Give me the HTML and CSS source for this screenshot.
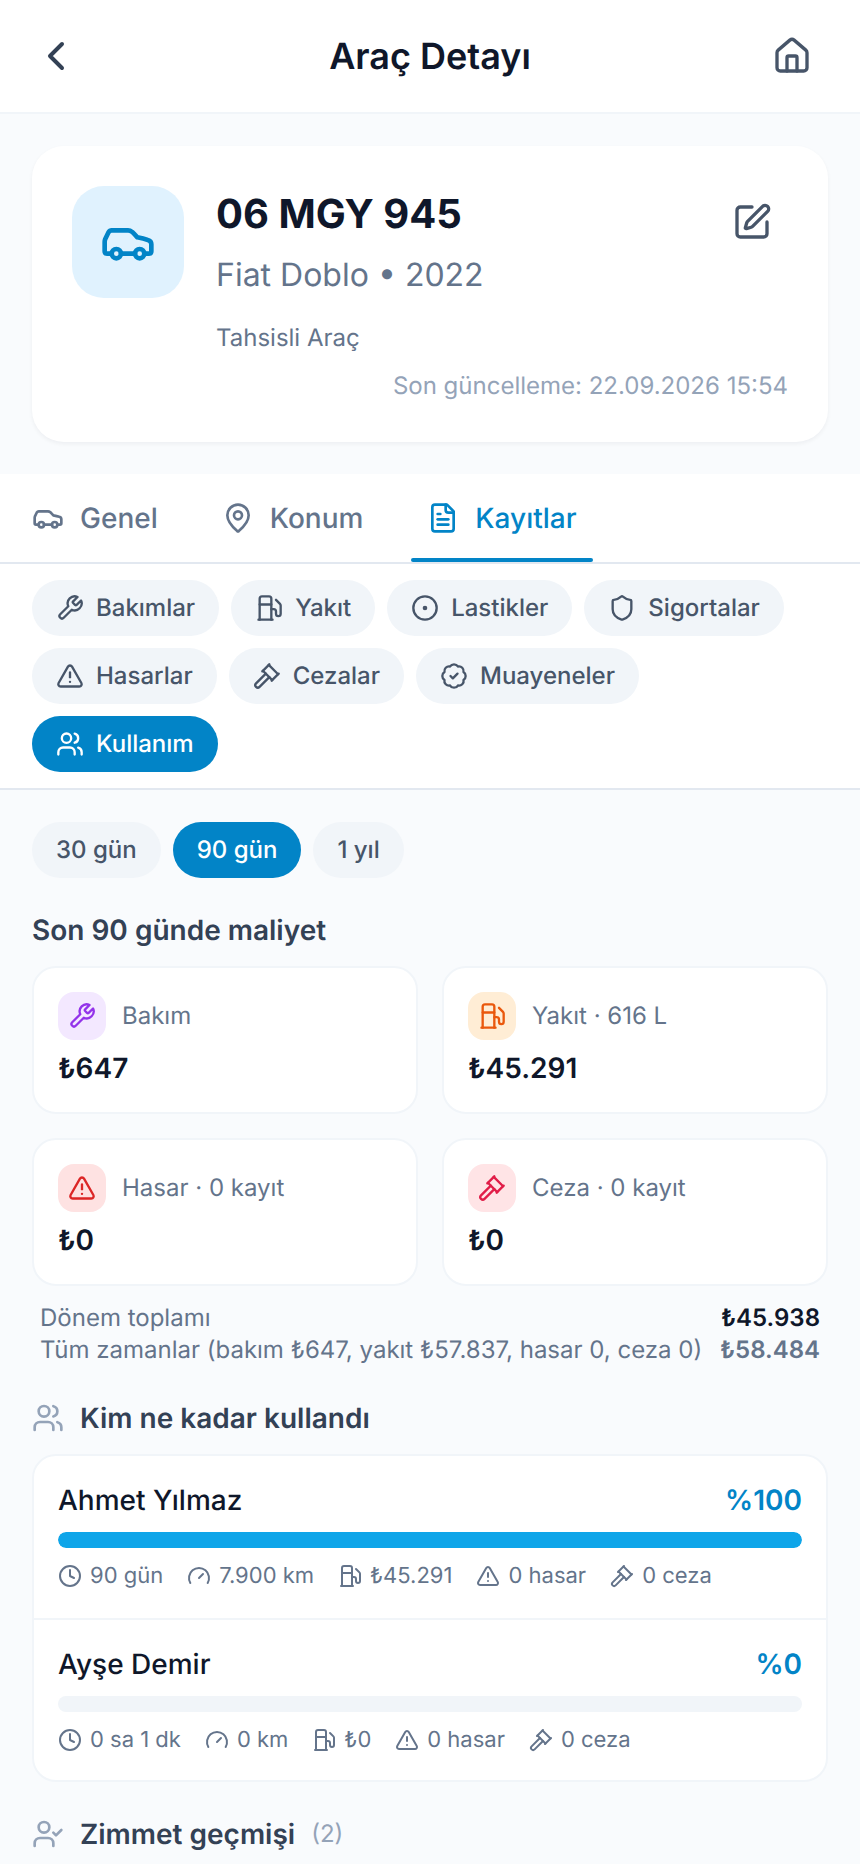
FILE: index.html
```html
<!DOCTYPE html>
<html lang="tr">
<head>
<meta charset="utf-8">
<title>Araç Detayı</title>
<link rel="stylesheet" href="styles.css">
</head>
<body>
<svg class="sprite" aria-hidden="true">
  <symbol id="back" viewBox="0 0 24 24"><path d="m15 18-6-6 6-6"/></symbol>
  <symbol id="home" viewBox="0 0 24 24"><path d="M15 21v-8a1 1 0 0 0-1-1h-4a1 1 0 0 0-1 1v8"/><path d="M3 10a2 2 0 0 1 .709-1.528l7-5.999a2 2 0 0 1 2.582 0l7 5.999A2 2 0 0 1 21 10v9a2 2 0 0 1-2 2H5a2 2 0 0 1-2-2z"/></symbol>
  <symbol id="edit" viewBox="0 0 24 24"><path d="M12 3H5a2 2 0 0 0-2 2v14a2 2 0 0 0 2 2h14a2 2 0 0 0 2-2v-7"/><path d="M18.375 2.625a1 1 0 0 1 3 3l-9.013 9.014a2 2 0 0 1-.853.505l-2.873.84a.5.5 0 0 1-.62-.62l.84-2.873a2 2 0 0 1 .506-.852z"/></symbol>
  <symbol id="car" viewBox="0 0 24 24"><path d="M19 17h2c.6 0 1-.4 1-1v-3c0-.9-.7-1.700-1.500-1.900C18.700 10.600 16 10 16 10s-1.300-1.400-2.200-2.300c-.5-.4-1.100-.7-1.800-.7H5c-.6 0-1.100.4-1.400.9l-1.400 2.900A3.700 3.700 0 0 0 2 12v4c0 .6.4 1 1 1h2"/><circle cx="7" cy="17" r="2"/><path d="M9 17h6"/><circle cx="17" cy="17" r="2"/></symbol>
  <symbol id="pin" viewBox="0 0 24 24"><path d="M20 10c0 4.993-5.539 10.193-7.399 11.799a1 1 0 0 1-1.202 0C9.539 20.193 4 14.993 4 10a8 8 0 0 1 16 0"/><circle cx="12" cy="10" r="3"/></symbol>
  <symbol id="file" viewBox="0 0 24 24"><path d="M15 2H6a2 2 0 0 0-2 2v16a2 2 0 0 0 2 2h12a2 2 0 0 0 2-2V7Z"/><path d="M14 2v4a2 2 0 0 0 2 2h4"/><path d="M10 9H8"/><path d="M16 13H8"/><path d="M16 17H8"/></symbol>
  <symbol id="wrench" viewBox="0 0 24 24"><path d="M14.700 6.300a1 1 0 0 0 0 1.400l1.600 1.600a1 1 0 0 0 1.400 0l3.770-3.770a6 6 0 0 1-7.940 7.940l-6.910 6.910a2.120 2.120 0 0 1-3-3l6.910-6.910a6 6 0 0 1 7.940-7.940l-3.760 3.760z"/></symbol>
  <symbol id="fuel" viewBox="0 0 24 24"><path d="M3 22h12"/><path d="M4 9h10"/><path d="M14 22V4a2 2 0 0 0-2-2H6a2 2 0 0 0-2 2v18"/><path d="M14 13h2a2 2 0 0 1 2 2v2a2 2 0 0 0 2 2a2 2 0 0 0 2-2V9.830a2 2 0 0 0-.59-1.420L18 5"/></symbol>
  <symbol id="tire" viewBox="0 0 24 24"><circle cx="12" cy="12" r="10"/><circle cx="12" cy="12" r="1"/></symbol>
  <symbol id="shield" viewBox="0 0 24 24"><path d="M20 13c0 5-3.500 7.500-7.660 8.950a1 1 0 0 1-.67-.01C7.500 20.500 4 18 4 13V6a1 1 0 0 1 1-1c2 0 4.500-1.200 6.240-2.720a1.170 1.170 0 0 1 1.520 0C14.510 3.810 17 5 19 5a1 1 0 0 1 1 1z"/></symbol>
  <symbol id="alert" viewBox="0 0 24 24"><path d="m21.730 18-8-14a2 2 0 0 0-3.480 0l-8 14A2 2 0 0 0 4 21h16a2 2 0 0 0 1.730-3"/><path d="M12 9v4"/><path d="M12 17h.01"/></symbol>
  <symbol id="gavel" viewBox="0 0 24 24"><path d="m14 13-8.381 8.380a1 1 0 0 1-3.001-3l8.384-8.381"/><path d="m16 16 6-6"/><path d="m21.500 10.500-8-8"/><path d="m8 8 6-6"/><path d="m8.500 7.500 8 8"/></symbol>
  <symbol id="badge" viewBox="0 0 24 24"><path d="M3.850 8.620a4 4 0 0 1 4.780-4.770 4 4 0 0 1 6.740 0 4 4 0 0 1 4.780 4.780 4 4 0 0 1 0 6.740 4 4 0 0 1-4.770 4.780 4 4 0 0 1-6.750 0 4 4 0 0 1-4.780-4.770 4 4 0 0 1 0-6.760Z"/><path d="m9 12 2 2 4-4"/></symbol>
  <symbol id="users" viewBox="0 0 24 24"><path d="M16 21v-2a4 4 0 0 0-4-4H6a4 4 0 0 0-4 4v2"/><circle cx="9" cy="7" r="4"/><path d="M22 21v-2a4 4 0 0 0-3-3.870"/><path d="M16 3.130a4 4 0 0 1 0 7.750"/></symbol>
  <symbol id="usercheck" viewBox="0 0 24 24"><path d="m16 11 2 2 4-4"/><path d="M16 21v-2a4 4 0 0 0-4-4H6a4 4 0 0 0-4 4v2"/><circle cx="9" cy="7" r="4"/></symbol>
  <symbol id="clock" viewBox="0 0 24 24"><circle cx="12" cy="12" r="10"/><path d="M12 6v6l4 2"/></symbol>
  <symbol id="gauge" viewBox="0 0 24 24"><path d="m12 14 4-4"/><path d="M3.340 19a10 10 0 1 1 17.320 0"/></symbol>
</svg>

<header class="topbar">
  <svg class="icon back"><use href="#back"/></svg>
  <h1 class="topbar-title">Araç Detayı</h1>
  <svg class="icon i40 home"><use href="#home"/></svg>
</header>

<section class="vehicle">
  <div class="vehicle-main">
    <div class="vehicle-tile"><svg class="icon i56"><use href="#car"/></svg></div>
    <div class="vehicle-info">
      <h2 class="plate">06 MGY 945</h2>
      <p class="model">Fiat Doblo • 2022</p>
      <p class="kind">Tahsisli Araç</p>
    </div>
    <svg class="icon i40 edit"><use href="#edit"/></svg>
  </div>
  <p class="updated">Son güncelleme: 22.09.2026 15:54</p>
</section>

<nav class="tabs">
  <a class="tab"><svg class="icon i32"><use href="#car"/></svg>Genel</a>
  <a class="tab"><svg class="icon i32"><use href="#pin"/></svg>Konum</a>
  <a class="tab active"><svg class="icon i32"><use href="#file"/></svg>Kayıtlar</a>
</nav>

<div class="chips records">
  <span class="chip"><svg class="icon i28"><use href="#wrench"/></svg>Bakımlar</span>
  <span class="chip"><svg class="icon i28"><use href="#fuel"/></svg>Yakıt</span>
  <span class="chip"><svg class="icon i28"><use href="#tire"/></svg>Lastikler</span>
  <span class="chip"><svg class="icon i28"><use href="#shield"/></svg>Sigortalar</span>
  <span class="chip"><svg class="icon i28"><use href="#alert"/></svg>Hasarlar</span>
  <span class="chip"><svg class="icon i28"><use href="#gavel"/></svg>Cezalar</span>
  <span class="chip"><svg class="icon i28"><use href="#badge"/></svg>Muayeneler</span>
  <span class="chip on"><svg class="icon i28"><use href="#users"/></svg>Kullanım</span>
</div>

<main class="content">
  <div class="chips">
    <span class="chip">30 gün</span>
    <span class="chip on">90 gün</span>
    <span class="chip">1 yıl</span>
  </div>

  <h3 class="heading cost-heading">Son 90 günde maliyet</h3>
  <div class="costs">
    <div class="cost"><div class="cost-head"><span class="cost-icon violet"><svg class="icon i28"><use href="#wrench"/></svg></span>Bakım</div><b class="cost-value">₺647</b></div>
    <div class="cost"><div class="cost-head"><span class="cost-icon orange"><svg class="icon i28"><use href="#fuel"/></svg></span>Yakıt · 616 L</div><b class="cost-value">₺45.291</b></div>
    <div class="cost"><div class="cost-head"><span class="cost-icon red"><svg class="icon i28"><use href="#alert"/></svg></span>Hasar · 0 kayıt</div><b class="cost-value">₺0</b></div>
    <div class="cost"><div class="cost-head"><span class="cost-icon rose"><svg class="icon i28"><use href="#gavel"/></svg></span>Ceza · 0 kayıt</div><b class="cost-value">₺0</b></div>
  </div>
  <div class="totals">
    <div class="total"><span>Dönem toplamı</span><b class="dark">₺45.938</b></div>
    <div class="total"><span>Tüm zamanlar (bakım ₺647, yakıt ₺57.837, hasar 0, ceza 0)</span><b>₺58.484</b></div>
  </div>

  <h3 class="heading usage-heading"><svg class="icon i32"><use href="#users"/></svg>Kim ne kadar kullandı</h3>
  <div class="usage">
    <div class="person">
      <div class="person-head"><span>Ahmet Yılmaz</span><b class="share">%100</b></div>
      <div class="bar"><div class="bar-fill" style="width:100%"></div></div>
      <div class="stats">
        <span class="stat"><svg class="icon i24"><use href="#clock"/></svg>90 gün</span>
        <span class="stat"><svg class="icon i24"><use href="#gauge"/></svg>7.900 km</span>
        <span class="stat"><svg class="icon i24"><use href="#fuel"/></svg>₺45.291</span>
        <span class="stat"><svg class="icon i24"><use href="#alert"/></svg>0 hasar</span>
        <span class="stat"><svg class="icon i24"><use href="#gavel"/></svg>0 ceza</span>
      </div>
    </div>
    <div class="person">
      <div class="person-head"><span>Ayşe Demir</span><b class="share">%0</b></div>
      <div class="bar"><div class="bar-fill" style="width:0%"></div></div>
      <div class="stats">
        <span class="stat"><svg class="icon i24"><use href="#clock"/></svg>0 sa 1 dk</span>
        <span class="stat"><svg class="icon i24"><use href="#gauge"/></svg>0 km</span>
        <span class="stat"><svg class="icon i24"><use href="#fuel"/></svg>₺0</span>
        <span class="stat"><svg class="icon i24"><use href="#alert"/></svg>0 hasar</span>
        <span class="stat"><svg class="icon i24"><use href="#gavel"/></svg>0 ceza</span>
      </div>
    </div>
  </div>

  <h3 class="heading history-heading"><svg class="icon i32"><use href="#usercheck"/></svg>Zimmet geçmişi<span class="count">(2)</span></h3>
</main>
</body>
</html>
```
FILE: styles.css
```css
* { box-sizing: border-box; margin: 0; }
html { overflow: hidden; }
body {
  width: 860px;
  height: 1864px;
  overflow: hidden;
  background: #f9fbfd;
  color: #0f172a;
  font-family: Inter, sans-serif;
  font-size: 24px;
  line-height: 32px;
  text-rendering: geometricPrecision;
}
.sprite { display: none; }
.icon {
  flex: none;
  fill: none;
  stroke: currentColor;
  stroke-width: 2;
  stroke-linecap: round;
  stroke-linejoin: round;
}
.i24 { width: 24px; height: 24px; }
.i28 { width: 28px; height: 28px; }
.i32 { width: 32px; height: 32px; }
.i40 { width: 40px; height: 40px; }
.i56 { width: 56px; height: 56px; }

.topbar {
  height: 114px;
  padding: 0 48px 0 32px;
  display: grid;
  grid-template-columns: 56px 1fr 40px;
  align-items: center;
  background: #fff;
  border-bottom: 2px solid #f1f5f9;
}
.back { width: 48px; height: 48px; color: #334155; }
.topbar-title { font-size: 36px; line-height: 56px; font-weight: 600; text-align: center; }
.home { color: #475569; }

.vehicle {
  margin: 32px 32px;
  height: 296px;
  padding: 40px 40px 0;
  border-radius: 32px;
  background: #fff;
  box-shadow: 0 2px 4px rgba(15, 23, 42, .05);
}
.vehicle-main { display: flex; }
.vehicle-tile {
  width: 112px;
  height: 112px;
  border-radius: 32px;
  background: #e0f2fe;
  color: #0284c7;
  display: grid;
  place-items: center;
}
.vehicle-info { flex: 1; padding-left: 32px; }
.plate { font-size: 40px; line-height: 56px; font-weight: 700; }
.model { margin-top: 9px; font-size: 32px; line-height: 48px; color: #64748b; }
.kind { margin-top: 23px; color: #64748b; }
.edit { margin: 16px 16px 0 0; color: #475569; }
.updated { margin-top: 16px; text-align: right; color: #94a3b8; }

.tabs {
  height: 90px;
  padding: 0 32px;
  display: flex;
  gap: 32px;
  background: #fff;
  border-bottom: 2px solid #e2e8f0;
}
.tab {
  position: relative;
  display: flex;
  align-items: center;
  gap: 16px;
  padding-right: 16px;
  font-size: 28px;
  font-weight: 500;
  color: #64748b;
}
.tab + .tab { padding-left: 16px; }
.tab.active { color: #0284c7; }
.active::after {
  content: "";
  position: absolute;
  left: 0;
  right: 0;
  bottom: 0;
  height: 4px;
  border-radius: 2px;
  background: #0284c7;
}

.chips { display: flex; flex-wrap: wrap; gap: 12px; }
.records { padding: 16px 32px; background: #fff; border-bottom: 2px solid #e2e8f0; }
.chip {
  height: 56px;
  padding: 0 24px;
  display: flex;
  align-items: center;
  gap: 12px;
  border-radius: 28px;
  background: #f1f5f9;
  color: #475569;
  font-weight: 500;
}
.chip.on { background: #0284c7; color: #fff; }

.content { padding: 32px 32px 0; }
.heading {
  display: flex;
  align-items: center;
  gap: 16px;
  font-size: 28px;
  line-height: 40px;
  font-weight: 600;
  color: #334155;
}
.heading .icon { color: #94a3b8; }
.cost-heading { margin-top: 32px; }
.costs { margin-top: 16px; display: grid; grid-template-columns: 1fr 1fr; gap: 24px; }
.cost {
  height: 148px;
  padding: 24px;
  border: 2px solid #f1f5f9;
  border-radius: 24px;
  background: #fff;
}
.cost-head { display: flex; align-items: center; gap: 16px; color: #64748b; }
.cost-icon { width: 48px; height: 48px; border-radius: 16px; display: grid; place-items: center; }
.violet { background: #f3e8ff; color: #9333ea; }
.orange { background: #ffedd5; color: #ea580c; }
.red { background: #fee2e2; color: #dc2626; }
.rose { background: #ffe4e6; color: #e11d48; }
.cost-value { display: block; margin-top: 8px; font-size: 28px; line-height: 40px; font-weight: 600; }

.totals { margin-top: 16px; padding: 0 8px; color: #64748b; }
.total { display: flex; justify-content: space-between; }
.total b { font-weight: 600; }
.total .dark { color: #0f172a; }

.usage-heading { margin-top: 32px; }
.usage { margin-top: 16px; border: 2px solid #f1f5f9; border-radius: 24px; background: #fff; }
.person { height: 162px; padding: 24px; }
.person + .person { border-top: 2px solid #f1f5f9; }
.person-head { display: flex; justify-content: space-between; font-size: 28px; line-height: 40px; font-weight: 500; }
.share { font-weight: 600; color: #0284c7; }
.bar { height: 16px; margin-top: 12px; border-radius: 8px; background: #f1f5f9; overflow: hidden; }
.bar-fill { height: 16px; border-radius: 8px; background: #0ea5e9; }
.stats { display: flex; gap: 24px; margin-top: 12px; font-size: 22px; color: #64748b; }
.stat { display: flex; align-items: center; gap: 8px; }
.history-heading { margin-top: 32px; }
.count { font-size: 24px; font-weight: 400; color: #94a3b8; }
```
